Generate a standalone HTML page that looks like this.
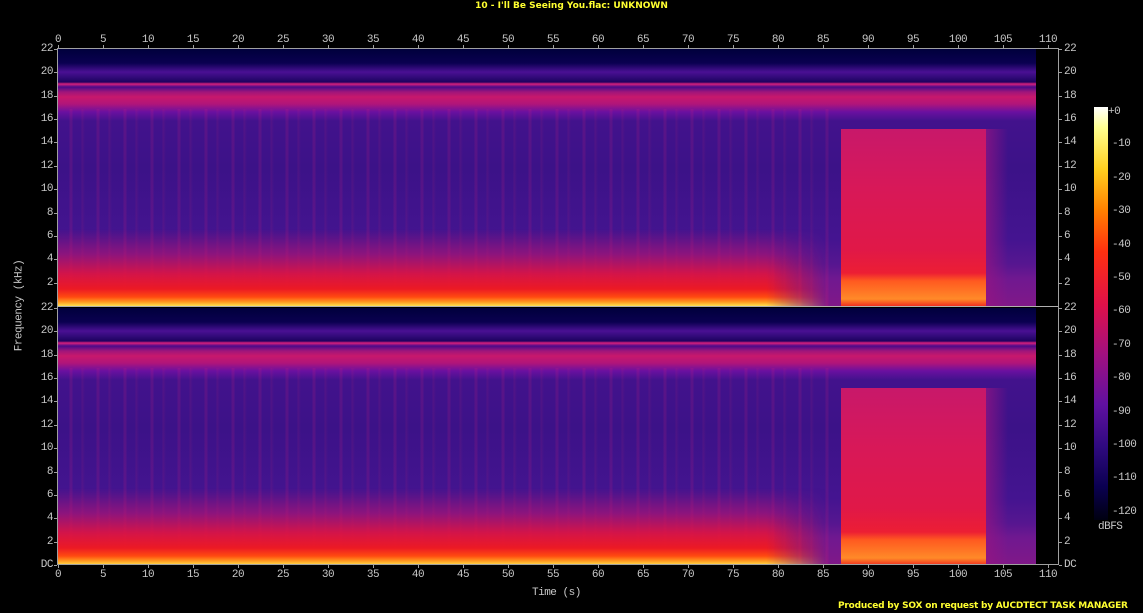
<!DOCTYPE html>
<html><head><meta charset="utf-8"><style>
html,body{margin:0;padding:0;background:#000;width:1143px;height:613px;overflow:hidden;position:relative;font-family:"Liberation Mono","DejaVu Sans Mono",monospace;}
.t{position:absolute;color:#c8c8c8;font-size:11px;line-height:11px;white-space:nowrap;letter-spacing:-0.5px}
.y{position:absolute;color:#ffff30;font-weight:bold;font-size:9px;font-family:"DejaVu Sans","Liberation Sans",sans-serif;white-space:nowrap}
.panel{position:absolute;left:58px;width:1000px;height:257px;overflow:hidden;background:#000}
.base{position:absolute;left:0;top:0;width:978px;height:257px;
background:linear-gradient(to bottom,#00003c 0px,#0a0050 14px,#4a1094 23px,#2a0870 30px,#200060 33px,#d8207c 35px,#4a0a8a 38px,#a0157a 43px,#c8186c 48px,#b0157a 55px,#6a10a0 63px,#42128c 72px,#3c1288 120px,#441490 190px,#561690 215px,#701890 230px,#801888 257px);}
.low{position:absolute;left:0;top:180px;width:770px;height:77px;
background:linear-gradient(to bottom,rgba(120,20,140,0) 0px,rgba(190,20,110,.55) 25px,rgba(230,20,60,.85) 45px,#ec1a24 60px,#ff4a10 68px,#ff9a20 73px,#ffe050 77px);
-webkit-mask-image:linear-gradient(to right,#000 0,#000 92%,transparent 100%);mask-image:linear-gradient(to right,#000 0,#000 92%,transparent 100%)}
.blk{position:absolute;left:783px;top:80px;width:145px;height:177px;
background:linear-gradient(to bottom,#c8186a 0,#d81858 60px,#e01848 120px,#ec1e34 144px,#ff5a20 152px,#ff8a28 170px,#f03020 177px);}
.blk2{position:absolute;left:928px;top:80px;width:22px;height:177px;background:linear-gradient(to right,rgba(150,20,130,.7),rgba(90,20,140,0))}
.tex{position:absolute;left:0;top:60px;width:778px;height:197px;
background:repeating-linear-gradient(to right,rgba(255,40,80,0) 0,rgba(255,40,80,0) 11px,rgba(220,30,120,.15) 12px,rgba(220,30,120,.15) 14px,rgba(255,40,80,0) 15px,rgba(255,40,80,0) 23px,rgba(230,40,100,.1) 24px,rgba(255,40,80,0) 27px);}
.sep{position:absolute;left:58px;top:306px;width:1001px;height:1px;background:#b0b0b0}
.ax{position:absolute;background:#a0a0a0}
</style></head><body>
<div class="y" style="left:0;width:1143px;text-align:center;top:1px">10 - I'll Be Seeing You.flac: UNKNOWN</div>
<div class="y" style="left:838px;top:601px;letter-spacing:-0.2px">Produced by SOX on request by AUCDTECT TASK MANAGER</div>

<div class="panel" style="top:49px"><div class="base"></div><div class="tex"></div><div class="low"></div><div class="blk"></div><div class="blk2"></div></div>
<div class="panel" style="top:308px"><div class="base"></div><div class="tex"></div><div class="low"></div><div class="blk"></div><div class="blk2"></div></div>
<div class="sep"></div>
<div class="ax" style="left:57px;top:48px;width:1px;height:517px"></div>
<div class="ax" style="left:1058px;top:48px;width:1px;height:517px"></div>
<div class="ax" style="left:57px;top:48px;width:1002px;height:1px"></div>
<div class="ax" style="left:57px;top:564px;width:1002px;height:1px"></div>

<div style="position:absolute;left:1094px;top:107px;width:14px;height:413px;background:linear-gradient(to bottom,#ffffff 0%,#ffff90 5%,#ffd020 15%,#ff8000 25%,#ff3010 35%,#e0104a 48%,#a01080 60%,#6010a0 72%,#300a80 82%,#0a0050 92%,#000010 100%)"></div>
<div class="t" style="left:1108px;top:107px">+0</div>
<div id="lab"></div>
<div class="t" style="left:1098px;top:522px">dBFS</div>
<div class="t" style="left:532px;top:588px">Time (s)</div>
<div class="t" style="left:-30px;top:300px;transform:rotate(-90deg);width:100px;text-align:center">Frequency (kHz)</div>
<script>
var h='';
for(var i=0;i<=22;i++){var x=58+i*9*5;h+='<div class="t" style="left:'+(x-20)+'px;width:40px;text-align:center;top:35px">'+(i*5)+'</div>';
h+='<div class="t" style="left:'+(x-20)+'px;width:40px;text-align:center;top:570px">'+(i*5)+'</div>';
h+='<div class="ax" style="left:'+x+'px;top:45px;width:1px;height:3px"></div><div class="ax" style="left:'+x+'px;top:565px;width:1px;height:3px"></div>';}
var P=[49,308];
for(var p=0;p<2;p++){for(var f=0;f<=22;f+=2){var y=P[p]+(22-f)/22*257;var s=f==0?'DC':f;if(p==0&&f==0)continue;
h+='<div class="t" style="left:20px;width:33px;text-align:right;top:'+(y-5)+'px">'+s+'</div>';
h+='<div class="t" style="left:1064px;top:'+(y-5)+'px">'+s+'</div>';
h+='<div class="ax" style="left:54px;top:'+Math.round(y)+'px;width:3px;height:1px"></div><div class="ax" style="left:1059px;top:'+Math.round(y)+'px;width:3px;height:1px"></div>';}}
for(var k=1;k<=12;k++){var y=111+k*33.4;h+='<div class="t" style="left:1112px;top:'+(y-5)+'px">-'+(k*10)+'</div>';}
document.getElementById('lab').innerHTML=h;
</script>
</body></html>
